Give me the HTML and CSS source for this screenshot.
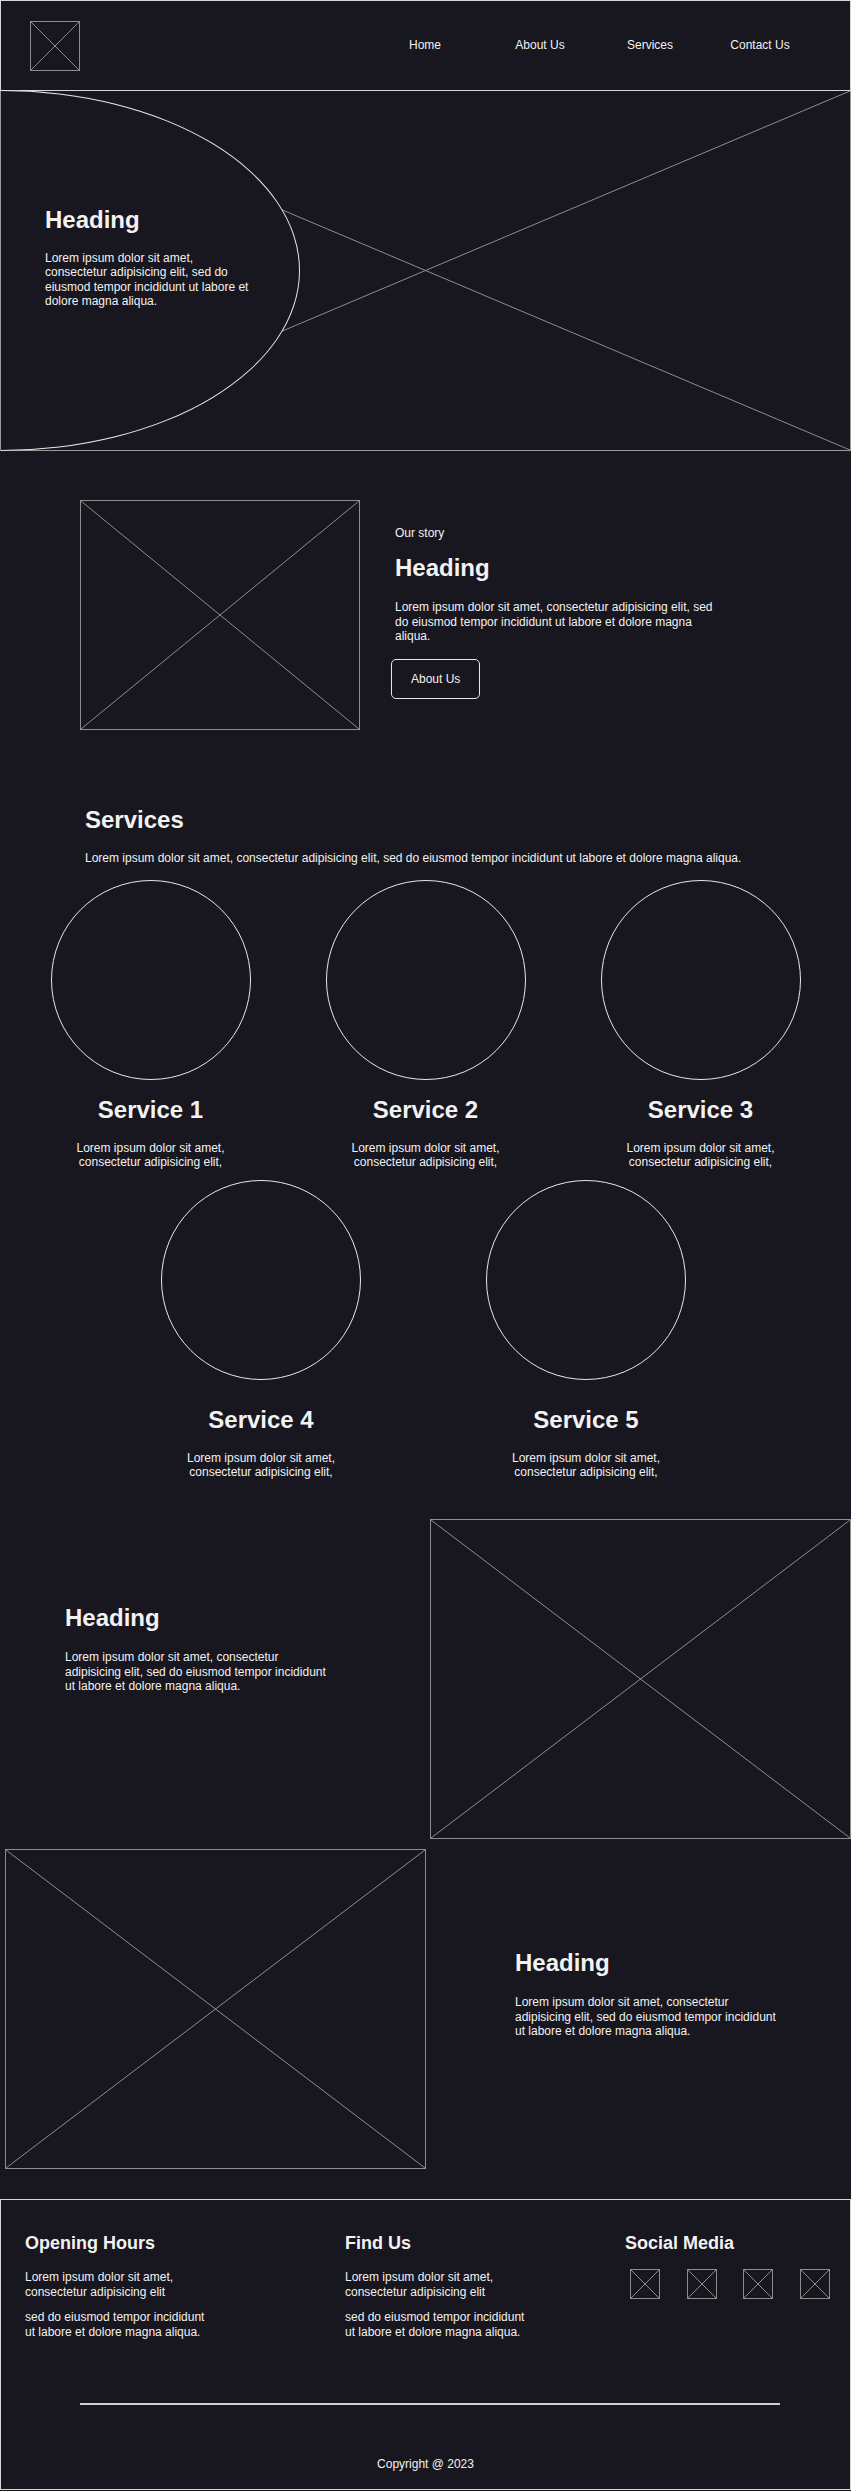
FILE: index.html
```html
<!DOCTYPE html>
<html>
	<head>
		<meta charset="UTF-8">
		<title>Wireframe</title>
		<link rel="stylesheet" href="styles.css">
	</head>
	<body>
		<header class="site-header">
			<div class="logo ph">
				<svg class="x" viewBox="0 0 100 100" preserveAspectRatio="none"><line x1="0" y1="0" x2="100" y2="100"/><line x1="100" y1="0" x2="0" y2="100"/></svg>
			</div>
			<nav>
				<ul class="nav">
					<li><a href="#">Home</a></li>
					<li><a href="#">About Us</a></li>
					<li><a href="#">Services</a></li>
					<li><a href="#">Contact Us</a></li>
				</ul>
			</nav>
		</header>

		<section class="hero">
			<svg class="x" viewBox="0 0 100 100" preserveAspectRatio="none"><line x1="0" y1="0" x2="100" y2="100"/><line x1="100" y1="0" x2="0" y2="100"/></svg>
			<div class="hero-panel">
				<h1 class="title">Heading</h1>
				<p class="hero-text">Lorem ipsum dolor sit amet, consectetur adipisicing elit, sed do eiusmod tempor incididunt ut labore et dolore magna aliqua.</p>
			</div>
		</section>

		<section class="story">
			<div class="story-img ph">
				<svg class="x" viewBox="0 0 100 100" preserveAspectRatio="none"><line x1="0" y1="0" x2="100" y2="100"/><line x1="100" y1="0" x2="0" y2="100"/></svg>
			</div>
			<div class="story-text">
				<div class="label">Our story</div>
				<h2 class="title">Heading</h2>
				<p class="story-p">Lorem ipsum dolor sit amet, consectetur adipisicing elit, sed do eiusmod tempor incididunt ut labore et dolore magna aliqua.</p>
				<a class="btn" href="#">About Us</a>
			</div>
		</section>

		<section class="services">
			<div class="services-intro">
				<h2 class="title">Services</h2>
				<p>Lorem ipsum dolor sit amet, consectetur adipisicing elit, sed do eiusmod tempor incididunt ut labore et dolore magna aliqua.</p>
			</div>
			<div class="services-row">
				<div class="service">
					<div class="circle"></div>
					<h3 class="title">Service 1</h3>
					<p>Lorem ipsum dolor sit amet, consectetur adipisicing elit,</p>
				</div>
				<div class="service">
					<div class="circle"></div>
					<h3 class="title">Service 2</h3>
					<p>Lorem ipsum dolor sit amet, consectetur adipisicing elit,</p>
				</div>
				<div class="service">
					<div class="circle"></div>
					<h3 class="title">Service 3</h3>
					<p>Lorem ipsum dolor sit amet, consectetur adipisicing elit,</p>
				</div>
			</div>
			<div class="services-row services-row-2">
				<div class="service">
					<div class="circle"></div>
					<h3 class="title">Service 4</h3>
					<p>Lorem ipsum dolor sit amet, consectetur adipisicing elit,</p>
				</div>
				<div class="service">
					<div class="circle"></div>
					<h3 class="title">Service 5</h3>
					<p>Lorem ipsum dolor sit amet, consectetur adipisicing elit,</p>
				</div>
			</div>
		</section>

		<section class="feature">
			<div class="feature-text">
				<h2 class="title">Heading</h2>
				<p>Lorem ipsum dolor sit amet, consectetur adipisicing elit, sed do eiusmod tempor incididunt ut labore et dolore magna aliqua.</p>
			</div>
			<div class="feature-img ph">
				<svg class="x" viewBox="0 0 100 100" preserveAspectRatio="none"><line x1="0" y1="0" x2="100" y2="100"/><line x1="100" y1="0" x2="0" y2="100"/></svg>
			</div>
		</section>

		<section class="feature feature-flip">
			<div class="feature-img ph">
				<svg class="x" viewBox="0 0 100 100" preserveAspectRatio="none"><line x1="0" y1="0" x2="100" y2="100"/><line x1="100" y1="0" x2="0" y2="100"/></svg>
			</div>
			<div class="feature-text">
				<h2 class="title">Heading</h2>
				<p>Lorem ipsum dolor sit amet, consectetur adipisicing elit, sed do eiusmod tempor incididunt ut labore et dolore magna aliqua.</p>
			</div>
		</section>

		<footer class="site-footer">
			<div class="footer-cols">
				<div class="footer-col">
					<h3>Opening Hours</h3>
					<p>Lorem ipsum dolor sit amet, consectetur adipisicing elit</p>
					<p>sed do eiusmod tempor incididunt ut labore et dolore magna aliqua.</p>
				</div>
				<div class="footer-col">
					<h3>Find Us</h3>
					<p>Lorem ipsum dolor sit amet, consectetur adipisicing elit</p>
					<p>sed do eiusmod tempor incididunt ut labore et dolore magna aliqua.</p>
				</div>
				<div class="footer-col">
					<h3>Social Media</h3>
					<div class="social">
						<a class="ph" href="#"><svg class="x" viewBox="0 0 100 100" preserveAspectRatio="none"><line x1="0" y1="0" x2="100" y2="100"/><line x1="100" y1="0" x2="0" y2="100"/></svg></a>
						<a class="ph" href="#"><svg class="x" viewBox="0 0 100 100" preserveAspectRatio="none"><line x1="0" y1="0" x2="100" y2="100"/><line x1="100" y1="0" x2="0" y2="100"/></svg></a>
						<a class="ph" href="#"><svg class="x" viewBox="0 0 100 100" preserveAspectRatio="none"><line x1="0" y1="0" x2="100" y2="100"/><line x1="100" y1="0" x2="0" y2="100"/></svg></a>
						<a class="ph" href="#"><svg class="x" viewBox="0 0 100 100" preserveAspectRatio="none"><line x1="0" y1="0" x2="100" y2="100"/><line x1="100" y1="0" x2="0" y2="100"/></svg></a>
					</div>
				</div>
			</div>
			<hr class="footer-line">
			<div class="copyright">Copyright @ 2023</div>
		</footer>
	</body>
</html>
```

FILE: styles.css
```css
body{
	margin: 0;
	background: #18161e;
	color: #f2f2f2;
	font: 12px/1.2 "Liberation Sans", Arial, sans-serif;
}
a{
	color: inherit;
	text-decoration: none;
}
p{
	margin: 0;
}
.title{
	margin: 0;
	font-size: 24px;
	font-weight: bold;
	line-height: 28.8px;
}

/* placeholder boxes with a cross */
.ph{
	display: block;
	box-sizing: border-box;
	border: 1px solid #8e8e8e;
}
.x{
	display: block;
	width: 100%;
	height: 100%;
}
.x line{
	stroke: #8e8e8e;
	stroke-width: 1;
	vector-effect: non-scaling-stroke;
}

/* header */
.site-header{
	height: 91px;
	box-sizing: border-box;
	border: 1px solid #d6d6d6;
	display: flex;
	align-items: center;
	justify-content: space-between;
	padding: 0 35px 0 29px;
}
.logo{
	width: 50px;
	height: 50px;
}
.nav{
	display: flex;
	margin: 0;
	padding: 0;
	list-style: none;
}
.nav li{
	width: 110px;
	text-align: center;
}
.nav li:first-child{
	width: 100px;
	margin-right: 10px;
}

/* hero */
.hero{
	position: relative;
	height: 360px;
	box-sizing: border-box;
	border: 1px solid #9a9a9a;
	border-top: 0;
}
.hero-panel{
	position: absolute;
	left: 0;
	top: -1px;
	bottom: -1px;
	width: 299px;
	box-sizing: border-box;
	background: #18161e;
	border: 1px solid #e8e8e8;
	border-left: 0;
	border-radius: 0 100% 100% 0 / 0 50% 50% 0;
	padding: 115px 0 0 44px;
}
.hero-text{
	width: 208px;
	margin-top: 16px;
}

/* our story */
.story{
	display: flex;
	padding: 49px 0 0 80px;
}
.story-img{
	width: 280px;
	height: 230px;
}
.story-text{
	margin-left: 35px;
	padding-top: 26px;
}
.label{
	margin-bottom: 14px;
}
.story-p{
	width: 325px;
	margin: 17px 0 16px;
}
.btn{
	display: inline-block;
	height: 40px;
	box-sizing: border-box;
	padding: 0 19px;
	margin-left: -4px;
	border: 1px solid #e8e8e8;
	border-radius: 5px;
	line-height: 38px;
}

/* services */
.services{
	padding-top: 76px;
}
.services-intro{
	padding-left: 85px;
}
.services-intro p{
	margin: 16px 0 15px;
}
.services-row{
	display: grid;
	grid-template-columns: repeat(3, 275px);
	justify-content: center;
}
.services-row-2{
	grid-template-columns: repeat(2, 325px);
	margin-top: 10px;
	padding-right: 4px;
}
.service{
	display: flex;
	flex-direction: column;
	align-items: center;
	text-align: center;
}
.circle{
	width: 200px;
	height: 200px;
	box-sizing: border-box;
	border: 1px solid #e8e8e8;
	border-radius: 50%;
}
.service .title{
	margin: 16px 0 16px;
}
.services-row-2 .service .title{
	margin-top: 26px;
}
.service p{
	width: 200px;
}

/* image + text rows */
.feature{
	display: flex;
	margin-top: 40px;
}
.feature-text{
	padding: 85px 0 0 65px;
}
.feature-text p{
	width: 265px;
	margin-top: 17px;
}
.feature-img{
	width: 421px;
	height: 320px;
	margin-left: auto;
}
.feature-flip{
	margin-top: 10px;
}
.feature-flip .feature-img{
	margin-left: 5px;
}
.feature-flip .feature-text{
	padding: 100px 0 0 89px;
}

/* footer */
.site-footer{
	margin-top: 30px;
	height: 291px;
	box-sizing: border-box;
	border: 1px solid #d6d6d6;
	padding-top: 33px;
}
.footer-cols{
	display: grid;
	grid-template-columns: 320px 280px 1fr;
	padding-left: 24px;
}
.footer-col h3{
	margin: 0 0 15px;
	font-size: 18px;
	line-height: 21.6px;
}
.footer-col p{
	width: 188px;
	line-height: 15px;
	margin-bottom: 10px;
}
.social{
	display: flex;
	justify-content: space-between;
	width: 200px;
	margin: -1px 0 0 5px;
}
.social a{
	width: 30px;
	height: 30px;
}
.footer-line{
	width: 700px;
	height: 2px;
	margin: 53px 0 0 79px;
	border: 0;
	background: #cfcfcf;
}
.copyright{
	margin-top: 52px;
	text-align: center;
}
```
